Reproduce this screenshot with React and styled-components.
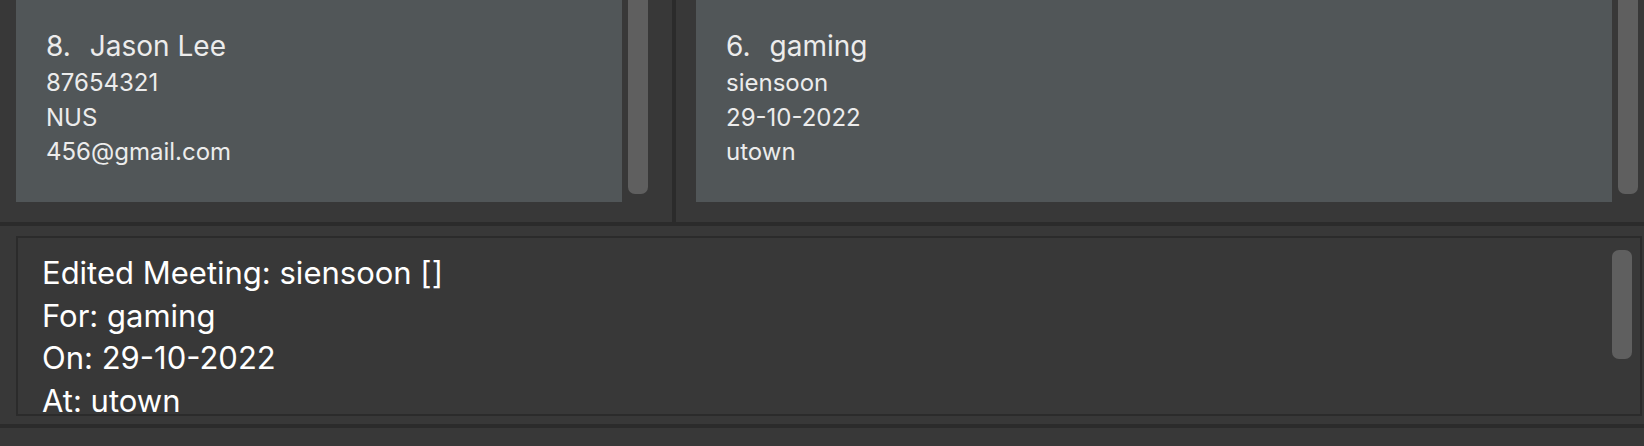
import React from 'react';
import styled, { createGlobalStyle } from 'styled-components';

const GlobalStyle = createGlobalStyle`
  html, body { margin: 0; padding: 0; background: #383838; }
  body { font-family: Inter, "Liberation Sans", sans-serif; overflow: hidden; }
`;

const people = [{ id: 8, name: 'Jason Lee', lines: ['87654321', 'NUS', '456@gmail.com'] }];
const meetings = [{ id: 6, name: 'gaming', lines: ['siensoon', '29-10-2022', 'utown'] }];

const result = ['Edited Meeting: siensoon []', 'For: gaming', 'On: 29-10-2022', 'At: utown'];

const Shell = styled.div`
  width: 1644px;
  height: 446px;
  background: #383838;
  display: flex;
  flex-direction: column;
`;

const TopSplit = styled.div`
  display: flex;
  height: 222px;
  border-bottom: 4px solid #2b2b2b;
`;

const ListPane = styled.div`
  display: flex;
  align-items: flex-start;
  gap: 6px;
  width: ${p => p.width}px;
  padding-left: ${p => p.padLeft}px;
  box-sizing: border-box;
  overflow: hidden;
  & + & { border-left: 4px solid #2b2b2b; }
`;

const Card = styled.div`
  width: ${p => p.width}px;
  height: 202px;
  box-sizing: border-box;
  background: #515658;
  padding: 28px 0 0 30px;
  color: #ececec;
`;

const NameRow = styled.div`
  display: flex;
  gap: 19px;
  font-size: 28px;
  line-height: 36px;
  margin-bottom: 2px;
`;

const Detail = styled.div`
  font-size: 24px;
  line-height: 34.5px;
`;

const ScrollThumb = styled.div`
  width: 20px;
  height: 194px;
  background: #5f5f5f;
  border-radius: 0 0 7px 7px;
  flex-shrink: 0;
`;

const ResultArea = styled.div`
  height: 202px;
  padding: 10px 2px 0 16px;
  box-sizing: border-box;
  border-bottom: 4px solid #2b2b2b;
`;

const ResultBox = styled.div`
  position: relative;
  height: 180px;
  box-sizing: border-box;
  border: 2px solid #2b2b2b;
  background: #383838;
  padding: 14px 0 0 24px;
  overflow: hidden;
  color: #ffffff;
  font-size: 31px;
  line-height: 42.5px;
`;

const ResultThumb = styled.div`
  position: absolute;
  top: 12px;
  right: 8px;
  width: 20px;
  height: 109px;
  border-radius: 7px;
  background: #5f5f5f;
`;

const PersonCard = ({ item, width }) => (
  <Card width={width}>
    <NameRow>
      <span>{item.id}.</span>
      <span>{item.name}</span>
    </NameRow>
    {item.lines.map(l => <Detail key={l}>{l}</Detail>)}
  </Card>
);

export default function App() {
  return (
    <Shell>
      <GlobalStyle />
      <TopSplit>
        <ListPane width={672} padLeft={16}>
          {people.map(p => <PersonCard key={p.id} item={p} width={606} />)}
          <ScrollThumb />
        </ListPane>
        <ListPane width={972} padLeft={20}>
          {meetings.map(m => <PersonCard key={m.id} item={m} width={916} />)}
          <ScrollThumb />
        </ListPane>
      </TopSplit>
      <ResultArea>
        <ResultBox>
          {result.map(r => <div key={r}>{r}</div>)}
          <ResultThumb />
        </ResultBox>
      </ResultArea>
    </Shell>
  );
}
